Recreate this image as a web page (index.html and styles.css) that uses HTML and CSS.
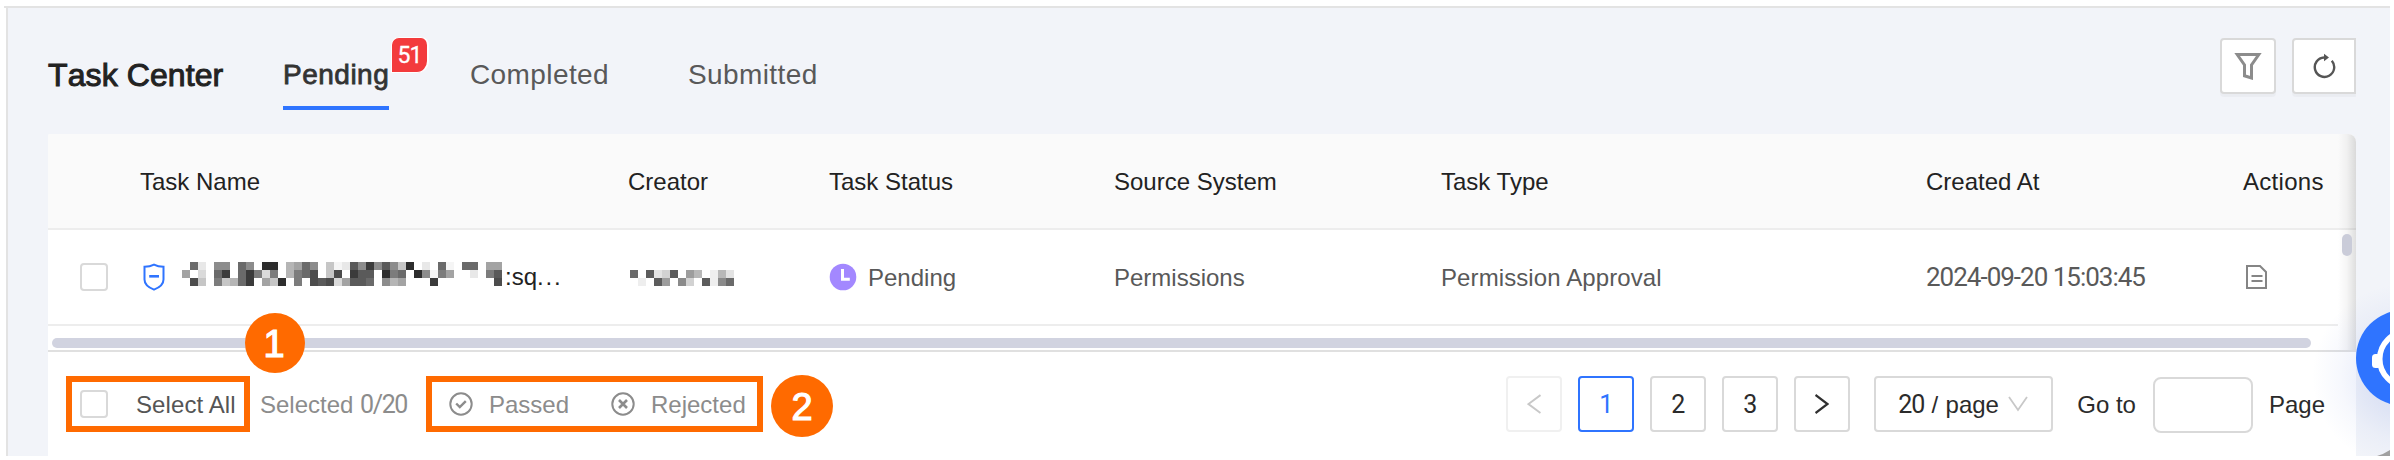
FILE: index.html
```
<!DOCTYPE html>
<html lang="en">
<head>
<meta charset="utf-8">
<title>Task Center</title>
<link rel="stylesheet" href="styles.css">
</head>
<body>
<div class="app">
  <header class="topbar">
    <h1 class="title">Task Center</h1>
    <nav class="tabs">
      <a class="tab active">Pending<span class="badge">51</span></a>
      <a class="tab completed">Completed</a>
      <a class="tab submitted">Submitted</a>
    </nav>
    <div class="tools">
      <button class="tool">
        <svg width="28" height="28" viewBox="0 0 28 28" fill="none" stroke="#8c8c8c" stroke-width="3"><path d="M3.2 2.5h21.6L17.5 13v13L10.5 23.800V13z"/></svg>
      </button>
      <button class="tool refresh">
        <svg width="24" height="26" viewBox="0 0 24 26"><path d="M19.800 7.800a9.700 9.700 0 1 1-7.800-3.300" fill="none" stroke="#555" stroke-width="2.400"/><path d="M12 .8l5 3.800-5 3.600z" fill="#555"/></svg>
      </button>
    </div>
  </header>

  <main class="card">
    <section class="table">
      <div class="row head">
        <span></span><span>Task Name</span><span>Creator</span><span>Task Status</span><span>Source System</span><span>Task Type</span><span>Created At</span><span class="actions">Actions</span>
      </div>
      <div class="row body">
        <span class="check"></span>
        <span class="name">
          <svg class="shield" width="22" height="28" viewBox="0 0 22 28" fill="none" stroke="#2f74ff" stroke-width="2"><path d="M1.500 3.800Q7 3.600 11 1.600Q15 3.600 20.500 3.800V16.500Q20.500 23 11 26.600Q1.500 23 1.500 16.500z"/><path d="M6.200 13.300h9.800" stroke-width="2.600"/></svg>
          <svg class="mosaic" width="320" height="24" viewBox="0 0 40 3" fill="none" shape-rendering="crispEdges">
            <path stroke="#2d2d2d" d="M10 .5h2M28 .5h1M25 1.500h1M29 1.500h1M12 2.500h1"/>
            <path stroke="#3b3b3b" d="M23 .5h1M5 1.500h1M8 1.500h1M21 1.500h1M8 2.500h1M31 2.500h1"/>
            <path stroke="#4c4c4c" d="M16 1.500h1M19 1.500h1M1 2.500h1M16 2.500h1M18 2.500h1M39 2.500h1"/>
            <path stroke="#5a5a5a" d="M21 .5h1M25 .5h1M22 1.500h2M39 1.500h1M17 2.500h1M21 2.500h2"/>
            <path stroke="#6a6a6a" d="M1 .5h1M7 .5h1M15 .5h1M32 .5h1M35 .5h2M4 1.500h1M7 1.500h1M15 1.500h1M27 1.500h1M7 2.500h1M23 2.500h1"/>
            <path stroke="#7c7c7c" d="M9 1.500h1M11 1.500h1M14 1.500h1M26 1.500h1M32 1.500h1M38 1.500h1M4 2.500h1M14 2.500h1"/>
            <path stroke="#8c8c8c" d="M4 .5h2M8 .5h1M16 .5h1M22 .5h1M24 .5h1M26 .5h1M30 1.500h1M25 2.500h1"/>
            <path stroke="#a3a3a3" d="M14 .5h1M38 .5h2M0 1.500h1M33 1.500h1M10 2.500h1M20 2.500h1M27 2.500h1"/>
            <path stroke="#b5b5b5" d="M13 .5h1M13 1.500h1M6 2.500h1M26 2.500h1"/>
            <path stroke="#c6c6c6" d="M18 .5h1M27 .5h1M18 1.500h1M2 2.500h1M5 2.500h1M11 2.500h1"/>
            <path stroke="#dadada" d="M2 1.500h1M10 1.500h1M19 2.500h1"/>
            <path stroke="#e8e8e8" d="M2 .5h1M20 .5h1M30 .5h1M36 1.500h1"/>
            <path stroke="#f5f5f5" d="M19 .5h1M33 .5h1M31 1.500h1"/>
          </svg>
          <span class="suffix">:sq<span class="dots">...</span></span>
        </span>
        <span class="creator">
          <svg width="104" height="16" viewBox="0 0 13 2" fill="none" shape-rendering="crispEdges">
            <path stroke="#5c5c5c" d="M2 .5h1M5 .5h1M3 1.500h1M9 1.500h1"/>
            <path stroke="#6a6a6a" d="M0 .5h1M12 1.500h1"/>
            <path stroke="#8a8a8a" d="M6 1.500h1M11 1.500h1"/>
            <path stroke="#9d9d9d" d="M7 .5h1M4 1.500h1"/>
            <path stroke="#b8b8b8" d="M8 .5h1M11 .5h1"/>
            <path stroke="#d2d2d2" d="M4 .5h1M7 1.500h1"/>
            <path stroke="#e3e3e3" d="M3 .5h1M12 .5h1"/>
            <path stroke="#eee" d="M10 .5h1M1 1.500h1M10 1.500h1"/>
          </svg>
        </span>
        <span class="status">
          <svg width="28" height="28" viewBox="0 0 28 28"><circle cx="14" cy="14" r="13.300" fill="#a388ff"/><path d="M13.500 6v10.200h7.300" fill="none" stroke="#fff" stroke-width="3"/></svg><span class="txt">Pending</span>
        </span>
        <span class="txt">Permissions</span>
        <span class="txt approval">Permission Approval</span>
        <span class="num date">2024-09-20 15:03:45</span>
        <span class="action">
          <svg width="22" height="24" viewBox="0 0 22 24" fill="none" stroke="#858585" stroke-width="2"><path d="M1 1h13l6 6v16H1z"/><path d="M5.500 11h11M5.500 16h11" /></svg>
        </span>
      </div>
      <div class="hscroll"><i class="hthumb"></i></div>
      <div class="edge"></div>
      <i class="vthumb"></i>
    </section>

    <footer class="footer">
      <div class="mark select">
        <span class="check"></span><span class="lbl-all">Select All</span>
      </div>
      <span class="selected">Selected <span class="num">0/20</span></span>
      <div class="mark batch">
        <svg width="24" height="24" viewBox="0 0 24 24" fill="none" stroke="#8c8c8c" stroke-width="2"><circle cx="12" cy="12" r="10.700"/><path d="M7.200 11.500l3.600 3.600 6-6" stroke-width="2.400"/></svg>
        <span class="passed">Passed</span>
        <svg width="24" height="24" viewBox="0 0 24 24" fill="none" stroke="#8c8c8c" stroke-width="2"><circle cx="12" cy="12" r="10.700"/><path d="M8 8l8 8M16 8l-8 8" stroke-width="2.600"/></svg>
        <span class="rejected">Rejected</span>
      </div>
      <div class="pager">
        <button class="pg off"><svg width="14" height="20" viewBox="0 0 14 20" fill="none" stroke="#c8c8c8" stroke-width="2"><path d="M13.500 1L1.500 10l12 9"/></svg></button>
        <button class="pg on">1</button>
        <button class="pg">2</button>
        <button class="pg">3</button>
        <button class="pg"><svg width="14" height="20" viewBox="0 0 14 20" fill="none" stroke="#303030" stroke-width="2.200"><path d="M.5 1l12 9-12 9"/></svg></button>
        <button class="size"><span class="per"><span class="num">20</span> / page</span><svg width="20" height="16" viewBox="0 0 20 16" fill="none" stroke="#c8c8c8" stroke-width="1.800"><path d="M1 1l9 13 9-13"/></svg></button>
        <span class="goto">Go to</span>
        <span class="jump"></span>
        <span class="txt">Page</span>
      </div>
    </footer>
  </main>

  <div class="float">
    <svg width="134" height="196" viewBox="2256 260 134 196">
      <defs><radialGradient id="glow" gradientUnits="userSpaceOnUse" cx="2404" cy="376" r="92"><stop offset=".4" stop-color="#5a78d8" stop-opacity=".13"/><stop offset=".7" stop-color="#5a78d8" stop-opacity=".05"/><stop offset="1" stop-color="#5a78d8" stop-opacity="0"/></radialGradient></defs>
      <circle cx="2404" cy="376" r="92" fill="url(#glow)"/>
      <circle cx="2404" cy="358" r="48" fill="#2f74ff"/>
      <circle cx="2407" cy="359" r="27.300" fill="none" stroke="#fff" stroke-width="5.600"/>
      <rect x="2372" y="354" width="9" height="14" rx="3.500" fill="#fff"/>
      <path d="M2377 456Q2384 454 2390 450V456z" fill="#a0a0a0"/>
    </svg>
  </div>
  <span class="step one">1</span>
  <span class="step two">2</span>
</div>
</body>
</html>
```
FILE: styles.css
```
* { box-sizing: border-box; }
body { margin: 0; background: #fff; font-family: "Liberation Sans", Arial, sans-serif; font-size: 24px; color: #222; }
svg { display: block; flex: none; }
.num, .badge, .pg { font-family: Roboto, sans-serif; }
.app { position: relative; width: 2386px; height: 450px; margin: 6px 0 0 4px; border-top: 2px solid #e3e3e3; overflow: hidden; }
.app::before { content: ""; position: absolute; z-index: -1; inset: 0 0 0 2px; background: #f2f4f9; border-left: 2px solid #e3e3e3; }

.topbar { display: flex; height: 126px; padding: 0 34px 0 44px; }
.title { margin: 47px 0 0; width: 235px; font-size: 32px; line-height: 40px; font-weight: 400; letter-spacing: .1px; -webkit-text-stroke: 1px #222; font-kerning: none; white-space: nowrap; }
.tabs { display: flex; flex: 1; font-size: 28px; line-height: 36px; color: #595959; }
.tab { position: relative; height: 102px; padding-top: 49px; letter-spacing: .4px; }
.tab.active { width: 106px; color: #333; letter-spacing: .5px; -webkit-text-stroke: .8px #333; border-bottom: 4px solid #2f74ff; }
.completed { margin-left: 81px; width: 138px; }
.submitted { margin-left: 80px; }
.badge { position: absolute; left: 108px; top: 29px; width: 38px; height: 36px; border: 1px solid #fff; border-right-width: 2px; border-radius: 8px 8px 12px 0; background: #f33b3d; color: #fff; font-size: 23px; line-height: 36px; text-align: center; letter-spacing: -1px; -webkit-text-stroke: .3px #fff; }
.tools { display: flex; gap: 16px; padding-top: 30px; }
.tool { display: flex; align-items: center; justify-content: center; width: 56px; height: 56px; padding: 0; border: 2px solid #d9d9d9; border-radius: 4px; background: #fff; box-shadow: 0 3px 1px rgba(0,0,0,.03); }
.refresh { width: 64px; border-radius: 4px 0 0 4px; }

.card { width: 2308px; height: 322px; margin-left: 44px; background: #fff; border-radius: 2px 8px 0 0; overflow: hidden; }
.table { position: relative; height: 218px; border-bottom: 2px solid #e0e0e0; }
.row { display: grid; grid-template-columns: 92px 488px 201px 285px 327px 485px 317px 1fr; align-items: center; height: 96px; border-bottom: 2px solid #ededed; color: #595959; white-space: nowrap; }
.head { padding-top: 2px; background: #fafafa; color: #222; }
.actions { letter-spacing: .3px; }
.body { width: 2290px; }
.txt { padding-top: 2px; }
.approval { letter-spacing: .1px; }
.check { width: 28px; height: 28px; border: 2px solid #d9d9d9; border-radius: 4px; background: #fff; }
.body .check { margin-left: 32px; }
.name { display: flex; align-items: center; color: #222; }
.shield { margin: 0 15px 0 3px; }
.mosaic { margin: -6px 3px 0 2px; }
.dots { letter-spacing: 1.800px; }
.creator { padding: 2px 0 0 2px; }
.status { display: flex; align-items: center; gap: 11px; }
.date { font-size: 26px; letter-spacing: -1px; }
.action { padding-left: 3px; }
.hscroll { height: 24px; padding: 12px 45px 0 4px; }
.hthumb { display: block; height: 10px; border-radius: 5px; background: #d1d3e0; }
.edge { position: absolute; right: 0; top: 0; width: 18px; height: 216px; background: linear-gradient(to right, rgba(0,0,0,0), rgba(0,0,0,.04) 50%, rgba(0,0,0,.13)); }
.vthumb { position: absolute; right: 4px; top: 100px; width: 10px; height: 22px; border-radius: 5px; background: #caccd9; }

.footer { display: flex; align-items: center; height: 104px; padding: 0 31px 0 18px; }
.mark { display: flex; align-items: center; height: 56px; border: 6px solid #ff6a00; }
.select { width: 184px; padding-left: 8px; color: #555; white-space: nowrap; }
.lbl-all { margin-left: 28px; padding-top: 2px; letter-spacing: .1px; }
.selected { width: 166px; padding: 1px 0 0 10px; color: #8c8c8c; white-space: nowrap; }
.selected .num { font-size: 25px; letter-spacing: -1.400px; }
.batch { margin-left: 10px; width: 337px; padding-left: 17px; color: #8c8c8c; }
.passed { width: 138px; padding: 2px 0 0 16px; }
.rejected { padding: 2px 0 0 16px; }
.pager { display: flex; align-items: center; margin-left: auto; color: #2b2b2b; white-space: nowrap; }
.pg { display: flex; align-items: center; justify-content: center; width: 56px; height: 56px; margin-right: 16px; padding: 0; border: 2px solid #d9d9d9; border-radius: 4px; background: #fff; color: #2b2b2b; font-size: 25px; }
.pg.off { border-color: #f0f0f0; }
.pg.on { border-color: #2f74ff; color: #2f74ff; }
.size { display: flex; align-items: center; gap: 9px; width: 179px; height: 56px; margin-left: 8px; padding: 0 0 0 22px; border: 2px solid #d9d9d9; border-radius: 4px; background: #fff; color: #2b2b2b; font: inherit; }
.per { word-spacing: .6px; }
.size .num { font-size: 25px; letter-spacing: -1px; }
.goto { margin-left: 24px; padding-top: 2px; }
.jump { width: 100px; height: 56px; margin: 2px 16px 0 17px; border: 2px solid #d9d9d9; border-radius: 8px; background: #fff; }

/* Help bubble and numbered callouts lie over the card. */
.float { position: absolute; right: 0; bottom: 0; pointer-events: none; }
.step { position: absolute; display: flex; align-items: center; justify-content: center; border-radius: 50%; background: #ff6a00; color: #fff; -webkit-text-stroke: 1.200px #fff; font-size: 38px; }
.one { left: 241px; top: 305px; width: 60px; height: 60px; padding: 3px 2px 0 0; }
.two { left: 767px; top: 367px; width: 62px; height: 62px; padding-top: 3px; }
```
